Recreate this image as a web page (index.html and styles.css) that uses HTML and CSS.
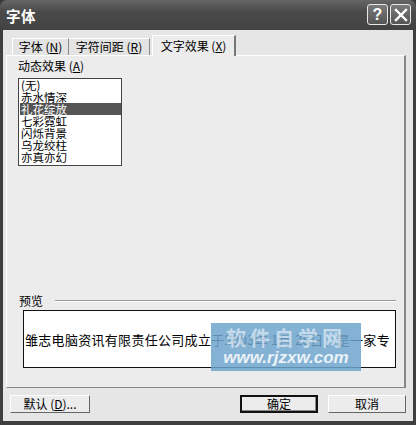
FILE: index.html
```html
<!DOCTYPE html>
<html>
<head>
  <meta charset="UTF-8">
  <title>字体</title>
  <link rel="stylesheet" href="styles.css">
</head>
<body>
  <div class="window">
    <div class="titlebar">
      <span class="title">字体</span>
      <div class="title-buttons">
        <span class="tbtn">?</span>
        <span class="tbtn close">
          <svg width="14" height="14" viewBox="0 0 14 14"><path d="M2 2 L12 12 M12 2 L2 12" stroke="#fff" stroke-width="2.4" stroke-linecap="square"/></svg>
        </span>
      </div>
    </div>

    <div class="body">
      <div class="tabs">
        <span class="tab tab-font">字体 (<u>N</u>)</span>
        <span class="tab tab-spacing">字符间距 (<u>R</u>)</span>
        <span class="tab tab-effect active">文字效果 (<u>X</u>)</span>
      </div>

      <div class="panel">
        <div class="field-label">动态效果 (<u>A</u>)</div>
        <ul class="listbox">
          <li>(无)</li>
          <li>赤水情深</li>
          <li class="selected">礼花绽放</li>
          <li>七彩霓虹</li>
          <li>闪烁背景</li>
          <li>乌龙绞柱</li>
          <li>亦真亦幻</li>
        </ul>

        <div class="preview-group">
          <div class="group-title">
            <span>预览</span>
            <span class="rule"></span>
          </div>
          <div class="preview">
            <span class="preview-text">雏志电脑资讯有限责任公司成立于2003年 1月 28日，是一家专</span>
            <!-- watermark from the source picture -->
            <div class="watermark">
              <div class="wm-big">软件自学网</div>
              <div class="wm-url">www.rjzxw.com</div>
            </div>
          </div>
        </div>
      </div>

      <div class="footer">
        <button class="btn btn-wide">默认 (<u>D</u>)...</button>
        <div class="footer-right">
          <button class="btn default">确定</button>
          <button class="btn">取消</button>
        </div>
      </div>
    </div>
  </div>
</body>
</html>
```

FILE: styles.css
```css
* {
  box-sizing: border-box;
}
body {
  margin: 0;
  width: 416px;
  height: 425px;
  overflow: hidden;
  background: #3a3a3a;
  font-family: "Noto Sans CJK SC", "Liberation Sans", sans-serif;
  font-size: 12px;
  color: #000;
}
.window {
  width: 416px;
  height: 425px;
  display: flex;
  flex-direction: column;
  background: #3f3f3f;
  border-radius: 7px 7px 0 0;
  overflow: hidden;
}
.titlebar {
  height: 30px;
  flex: none;
  display: flex;
  align-items: center;
  justify-content: space-between;
  padding: 0 5px 0 6px;
  background: linear-gradient(#666, #4a4a4a 40%, #424242 100%);
}
.title {
  color: #fff;
  font-weight: bold;
  font-size: 14.5px;
  letter-spacing: 0.5px;
}
.title-buttons {
  display: flex;
  gap: 2px;
  margin-top: -1px;
}
.tbtn {
  width: 21px;
  height: 21px;
  border: 1px solid #e8e8e8;
  border-radius: 3px;
  background: linear-gradient(#7a7a7a, #555);
  color: #fff;
  font-family: "Liberation Sans", sans-serif;
  font-weight: bold;
  font-size: 16px;
  display: flex;
  align-items: center;
  justify-content: center;
}
.body {
  flex: 1;
  margin: 0 3px 4px 3px;
  background: #e6e6e6;
  display: flex;
  flex-direction: column;
  padding: 5px 7px 0 3px;
}
.tabs {
  display: flex;
  align-items: flex-end;
  height: 20px;
  padding-left: 6px;
  position: relative;
  z-index: 1;
}
.tab {
  height: 17px;
  line-height: 16px;
  text-align: center;
  background: #e3e3e3;
  border-top: 1px solid #fff;
  border-right: 1px solid #8a8a8a;
  white-space: nowrap;
}
.tab-font {
  width: 57px;
  border-left: 1px solid #fff;
}
.tab-spacing {
  width: 81px;
}
.tab-effect {
  width: 84px;
}
.tab.active {
  height: 21px;
  line-height: 19px;
  background: #ececec;
  border-left: 1px solid #fff;
  border-right: 2px solid #777;
  margin-left: 2px;
  margin-bottom: -1px;
}
u {
  text-decoration: underline;
  text-underline-offset: 1px;
}
.panel {
  flex: 1;
  background: #ececec;
  border-top: 1px solid #fff;
  border-left: 1px solid #fff;
  border-right: 2px solid #888;
  border-bottom: 1px solid #888;
  display: flex;
  flex-direction: column;
  padding: 2px 8px 0 11px;
}
.field-label {
  line-height: 16px;
}
.listbox {
  list-style: none;
  margin: 4px 0 0 0;
  padding: 0 0 0 1px;
  width: 104px;
  height: 88px;
  background: #fff;
  border: 1px solid #444;
}
.listbox li {
  height: 12px;
  line-height: 12px;
  font-size: 11.5px;
  padding-left: 1px;
}
.listbox li.selected {
  background: #555;
  color: #fff;
}
.preview-group {
  margin-top: 128px;
}
.group-title {
  display: flex;
  align-items: center;
  gap: 12px;
  height: 13px;
  padding-left: 1px;
}
.rule {
  flex: 1;
  height: 2px;
  border-top: 1px solid #999;
  border-bottom: 1px solid #fff;
}
.preview {
  position: relative;
  margin: 3px 0 0 5px;
  width: 373px;
  height: 58px;
  background: #fff;
  border: 1px solid #111;
  display: flex;
  align-items: center;
}
.preview-text {
  font-size: 13px;
  white-space: nowrap;
  padding-left: 1px;
  letter-spacing: 0.3px;
}
.watermark {
  position: absolute;
  left: 187px;
  top: 12px;
  width: 150px;
  height: 48px;
  background: rgba(110, 165, 205, 0.85);
  color: rgba(255, 255, 255, 0.85);
  display: flex;
  flex-direction: column;
  align-items: center;
  justify-content: center;
  font-weight: bold;
}
.wm-big {
  font-size: 20px;
  line-height: 22px;
  letter-spacing: 4px;
  color: rgba(255, 255, 255, 0.55);
}
.wm-url {
  font-family: "Liberation Sans", sans-serif;
  font-style: italic;
  font-size: 17px;
  line-height: 18px;
}
.footer {
  height: 33px;
  flex: none;
  display: flex;
  align-items: center;
  justify-content: space-between;
  padding: 0 0 1px 4px;
}
.footer-right {
  display: flex;
  gap: 10px;
}
.btn {
  width: 78px;
  height: 18px;
  padding: 0;
  font-family: inherit;
  font-size: 12px;
  line-height: 14px;
  background: #ececec;
  border: 1px solid;
  border-color: #fff #666 #666 #fff;
  color: #000;
}
.btn-wide {
  width: 80px;
}
.btn.default {
  border: 2px solid #111;
  box-shadow: inset -1px -1px #888;
}
```
